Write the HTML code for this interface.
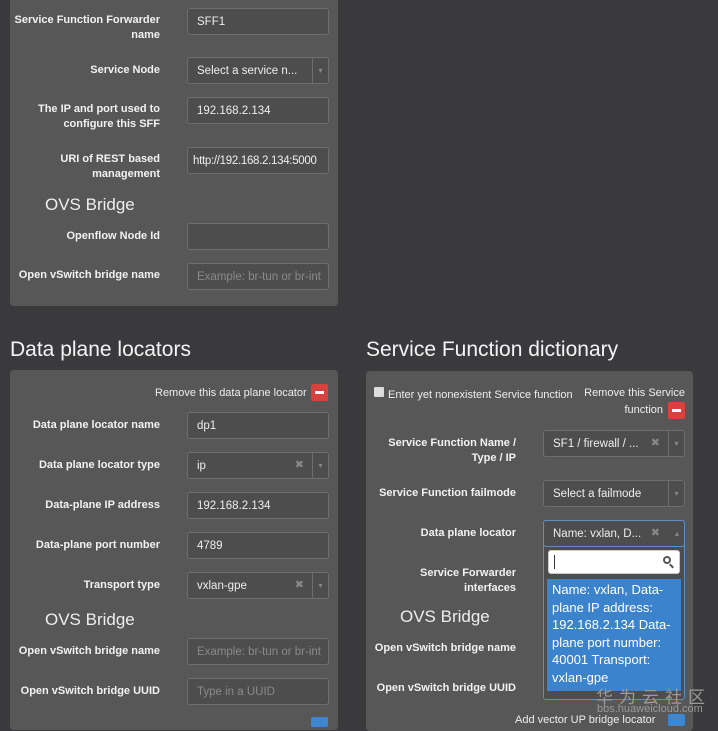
<!DOCTYPE html><html><head><meta charset="utf-8"><style>
*{box-sizing:border-box;margin:0;padding:0}
body{width:718px;height:722px;background:#3a3a3d;font-family:"Liberation Sans",sans-serif;position:relative;overflow:hidden;color:#fff}
.p{position:absolute;background:#575757;border-radius:4px}
.l{position:absolute;font-size:11px;font-weight:bold;color:#f2f2f2;text-align:right;line-height:15px}
.i{position:absolute;height:27px;border:1px solid #6e6e6e;background:#4d4d4d;border-radius:3px;font-size:11.5px;color:#eee;padding:1px 9px 0;line-height:25px;white-space:nowrap;overflow:hidden}
.ph{color:#8a8a8a}
.s:after{content:"▾";position:absolute;right:0;top:0;width:15px;height:25px;border-left:1px solid #6e6e6e;font-size:8px;color:#888;text-align:center}
.x{position:absolute;right:24px;top:0;color:#888;font-size:11px}
.h{position:absolute;font-size:17px;color:#eee}
.H{position:absolute;font-size:21px;color:#f4f4f4}
.r{position:absolute;width:17px;height:17px;background:#d9413f;border-radius:2px}
.r:after{content:"";position:absolute;left:4px;top:7px;width:9px;height:3px;background:#fff}
.t{position:absolute;font-size:11px;color:#eee}
</style></head><body>
<div class="p" style="left:10px;top:-5px;width:328px;height:311px"></div>
<div class="l" style="right:558px;top:13px;width:152px">Service Function Forwarder name</div>
<div class="i" style="left:187px;top:8px;width:142px">SFF1</div>
<div class="l" style="right:558px;top:63px;width:145px">Service Node</div>
<div class="i s" style="left:187px;top:57px;width:142px">Select a service n...</div>
<div class="l" style="right:558px;top:102px;width:140px">The IP and port used to configure this SFF</div>
<div class="i" style="left:187px;top:97px;width:142px">192.168.2.134</div>
<div class="l" style="right:558px;top:152px;width:120px">URI of REST based management</div>
<div class="i" style="left:187px;top:147px;width:142px;padding:1px 5px 0;letter-spacing:-0.3px">http://192.168.2.134:5000</div>
<div class="h" style="left:45px;top:195px">OVS Bridge</div>
<div class="l" style="right:558px;top:229px;width:145px">Openflow Node Id</div>
<div class="i" style="left:187px;top:223px;width:142px"></div>
<div class="l" style="right:558px;top:268px;width:150px">Open vSwitch bridge name</div>
<div class="i ph" style="left:187px;top:263px;width:142px">Example: br-tun or br-int</div>

<div class="H" style="left:10px;top:338px">Data plane locators</div>
<div class="H" style="left:366px;top:338px">Service Function dictionary</div>

<div class="p" style="left:10px;top:370px;width:328px;height:360px"></div>
<div class="t" style="left:155px;top:387px">Remove this data plane locator</div>
<div class="r" style="left:311px;top:384px"></div>
<div class="l" style="right:558px;top:418px;width:150px">Data plane locator name</div>
<div class="i" style="left:187px;top:412px;width:142px">dp1</div>
<div class="l" style="right:558px;top:458px;width:150px">Data plane locator type</div>
<div class="i s" style="left:187px;top:452px;width:142px">ip<span class="x">✖</span></div>
<div class="l" style="right:558px;top:498px;width:150px">Data-plane IP address</div>
<div class="i" style="left:187px;top:492px;width:142px">192.168.2.134</div>
<div class="l" style="right:558px;top:538px;width:150px">Data-plane port number</div>
<div class="i" style="left:187px;top:532px;width:142px">4789</div>
<div class="l" style="right:558px;top:578px;width:150px">Transport type</div>
<div class="i s" style="left:187px;top:572px;width:142px">vxlan-gpe<span class="x">✖</span></div>
<div class="h" style="left:45px;top:610px">OVS Bridge</div>
<div class="l" style="right:558px;top:644px;width:150px">Open vSwitch bridge name</div>
<div class="i ph" style="left:187px;top:638px;width:142px">Example: br-tun or br-int</div>
<div class="l" style="right:558px;top:684px;width:150px">Open vSwitch bridge UUID</div>
<div class="i ph" style="left:187px;top:678px;width:142px">Type in a UUID</div>
<div style="position:absolute;left:311px;top:717px;width:17px;height:10px;background:#3d86d0;border-radius:2px"></div>

<div class="p" style="left:366px;top:371px;width:327px;height:360px"></div>
<div style="position:absolute;left:374px;top:387px;width:10px;height:10px;background:#ddd;border-radius:1px"></div>
<div class="t" style="left:388px;top:389px">Enter yet nonexistent Service function</div>
<div class="t" style="left:580px;top:385px;width:105px;text-align:right;line-height:17px">Remove this Service<br>function<span style="display:inline-block;width:22px"></span></div>
<div class="r" style="left:668px;top:402px"></div>
<div class="l" style="right:202px;top:436px;width:130px">Service Function Name / Type / IP</div>
<div class="i s" style="left:543px;top:430px;width:142px">SF1 / firewall / ...<span class="x">✖</span></div>
<div class="l" style="right:202px;top:486px;width:150px">Service Function failmode</div>
<div class="i s" style="left:543px;top:480px;width:142px">Select a failmode</div>
<div class="l" style="right:202px;top:526px;width:150px">Data plane locator</div>
<div class="l" style="right:202px;top:566px;width:110px">Service Forwarder interfaces</div>
<div class="h" style="left:400px;top:607px">OVS Bridge</div>
<div class="l" style="right:202px;top:641px;width:150px">Open vSwitch bridge name</div>
<div class="l" style="right:202px;top:681px;width:150px">Open vSwitch bridge UUID</div>
<div style="position:absolute;left:543px;top:520px;width:142px;height:180px;border:1px solid #5b8fc4;border-radius:3px;background:#4d4d4d"></div>
<div class="i" style="left:543px;top:520px;width:142px;border-color:#5b8fc4;background:#4d4d4d">Name: vxlan, D...<span class="x">✖</span><span style="position:absolute;right:5px;top:0;font-size:8px;color:#888">▴</span></div>
<div style="position:absolute;left:548px;top:550px;width:132px;height:24px;background:#fff;border-radius:3px;border:1px solid #ccc"><div style="position:absolute;left:5px;top:4px;width:1px;height:14px;background:#333"></div><div style="position:absolute;right:8px;top:5px;width:8px;height:8px;border:2px solid #555;border-radius:50%"></div><div style="position:absolute;right:5px;top:14px;width:5px;height:2px;background:#555;transform:rotate(45deg)"></div></div>
<div style="position:absolute;left:547px;top:579px;width:134px;height:112px;background:#3b83cc;color:#fff;font-size:13px;line-height:17.5px;padding:2px 5px">Name: vxlan, Data-plane IP address: 192.168.2.134 Data-plane port number: 40001 Transport: vxlan-gpe</div>
<div class="t" style="left:515px;top:714px">Add vector UP bridge locator</div>
<div style="position:absolute;left:668px;top:714px;width:17px;height:12px;background:#3d86d0;border-radius:2px"></div>
<div style="position:absolute;left:596px;top:683px;font-size:17px;color:#9a9a9a;letter-spacing:6px;font-family:'Noto Sans CJK SC',sans-serif">华为云社区</div>
<div style="position:absolute;left:597px;top:703px;font-size:11px;color:#9a9a9a">bbs.huaweicloud.com</div>
</body></html>
